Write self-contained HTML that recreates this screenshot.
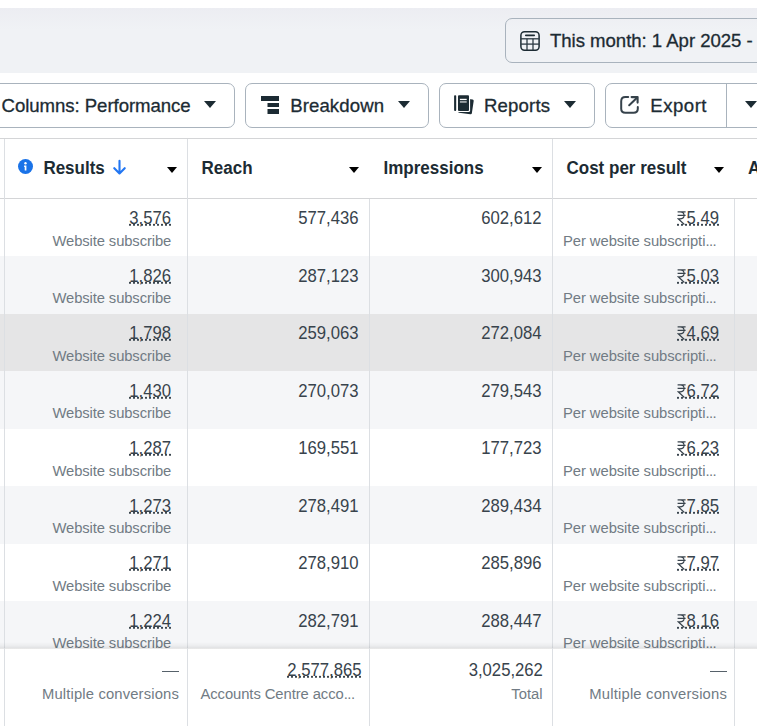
<!DOCTYPE html>
<html><head><meta charset="utf-8">
<style>
*{box-sizing:border-box;margin:0;padding:0}
html,body{width:757px;height:726px;overflow:hidden;background:#fff;position:relative}
body{font-family:"Liberation Sans",sans-serif;color:#1c2b33}
.a{position:absolute}
.band{left:0;top:8px;width:757px;height:65px;background:linear-gradient(#ecedf2,#f0f2f5 22px)}
.btn{position:absolute;border:1px solid #a9b3bd;border-radius:7px;height:45px;top:83px;background:#fff}
.bt{position:absolute;font-size:18.6px;line-height:18.6px;white-space:nowrap;color:#1c2b33;-webkit-text-stroke:0.3px #1c2b33}
.caret{position:absolute;width:0;height:0;border-left:6.3px solid transparent;border-right:6.3px solid transparent;border-top:7.7px solid #1c2b33}
.hl{position:absolute;left:0;width:757px;height:1px;background:#d6d7d9}
.vl{position:absolute;width:1px;background:#dcdfe3}
.row{position:absolute;left:0;width:757px}
.num{position:absolute;white-space:nowrap;color:#38434c}
.sub{position:absolute;white-space:nowrap;color:#717b84}
.dt{background:repeating-linear-gradient(90deg,#3a454e 0 2px,transparent 2px 4px) 0 var(--ul)/100% 1.7px no-repeat}
.hd{position:absolute;font-weight:bold;white-space:nowrap;color:#1c2b33}
.hc{position:absolute;width:0;height:0;border-left:5.2px solid transparent;border-right:5.2px solid transparent;border-top:6.2px solid #000}
</style></head><body>
<div class="a band"></div>

<!-- date button -->
<div class="a" style="left:505px;top:18px;width:300px;height:45px;border:1px solid #a9b3bd;border-radius:7px"></div>
<svg class="a" style="left:520px;top:31px" width="20" height="20" viewBox="0 0 20 20">
  <rect x="0.9" y="0.8" width="18.2" height="18.4" rx="3.6" fill="none" stroke="#1c2b33" stroke-width="1.5"/>
  <line x1="5.8" y1="4.3" x2="14.2" y2="4.3" stroke="#1c2b33" stroke-width="1.7" stroke-linecap="round"/>
  <line x1="1" y1="7.8" x2="19" y2="7.8" stroke="#2c3a43" stroke-width="1.3"/>
  <line x1="1" y1="13.1" x2="19" y2="13.1" stroke="#2c3a43" stroke-width="1.3"/>
  <line x1="7" y1="7.8" x2="7" y2="19" stroke="#2c3a43" stroke-width="1.3"/>
  <line x1="13" y1="7.8" x2="13" y2="19" stroke="#2c3a43" stroke-width="1.3"/>
</svg>
<div class="bt" style="left:550px;top:32.3px;letter-spacing:-0.04px">This month: 1 Apr 2025 -</div>

<!-- toolbar -->
<div class="btn" style="left:-20px;width:255px"></div>
<div class="bt" style="left:1.5px;top:96.8px;letter-spacing:-0.05px">Columns: Performance</div>
<div class="caret" style="left:204px;top:101px"></div>

<div class="btn" style="left:245px;width:184px"></div>
<svg class="a" style="left:261px;top:96px" width="18" height="18" viewBox="0 0 18 18">
  <rect x="0" y="0" width="18" height="5" fill="#1c2b33"/>
  <rect x="6.5" y="7" width="11.5" height="4" fill="#1c2b33"/>
  <rect x="6.5" y="13" width="11.5" height="5" fill="#1c2b33"/>
</svg>
<div class="bt" style="left:290.2px;top:96.8px;letter-spacing:0.1px">Breakdown</div>
<div class="caret" style="left:398px;top:101px"></div>

<div class="btn" style="left:439px;width:156px"></div>
<svg class="a" style="left:450px;top:90px" width="30" height="30" viewBox="0 0 30 30">
  <rect x="8.85" y="8.65" width="14" height="14.9" rx="1.3" transform="rotate(8.5 15.85 16.1)" fill="#1c2b33"/>
  <rect x="6.9" y="4" width="13.2" height="18" rx="1.6" fill="#fff"/>
  <rect x="8" y="5.2" width="11" height="15.7" rx="1" fill="#1c2b33"/>
  <rect x="4.1" y="5.2" width="2.1" height="15.7" rx="0.9" fill="#1c2b33"/>
  <rect x="9.9" y="8.8" width="6.8" height="1.3" fill="#fff"/>
  <rect x="9.9" y="11.3" width="6.8" height="1.3" fill="#fff" fill-opacity="0.8"/>
</svg>
<div class="bt" style="left:484px;top:96.8px;letter-spacing:0.15px">Reports</div>
<div class="caret" style="left:564px;top:101px"></div>

<div class="btn" style="left:605px;width:200px"></div>
<div class="a" style="left:726px;top:83px;width:1px;height:45px;background:#a9b3bd"></div>
<svg class="a" style="left:620.4px;top:95px" width="19" height="19" viewBox="0 0 19 19">
  <path d="M8.2 2.1 H5.4 Q1.2 2.1 1.2 6.3 V13.8 Q1.2 17.8 5.4 17.8 H13.6 Q17.8 17.8 17.8 13.8 V12" fill="none" stroke="#36424b" stroke-width="2" stroke-linecap="round"/>
  <path d="M11.6 2.1 H17.6 V7.6" fill="none" stroke="#36424b" stroke-width="2.1" stroke-linecap="round" stroke-linejoin="round"/>
  <path d="M17 2.7 L9.2 10.3" fill="none" stroke="#36424b" stroke-width="2" stroke-linecap="round"/>
</svg>
<div class="bt" style="left:650.3px;top:96.8px;letter-spacing:0.5px">Export</div>
<div class="caret" style="left:745px;top:101px"></div>

<!-- ROWS -->
<div class="a" style="left:0;top:199px;width:757px;height:57px;background:#fff"></div>
<div class="a" style="left:0;top:256px;width:757px;height:58px;background:#f5f6f8"></div>
<div class="a" style="left:0;top:314px;width:757px;height:57px;background:#e5e5e6"></div>
<div class="a" style="left:0;top:371px;width:757px;height:58px;background:#f5f6f8"></div>
<div class="a" style="left:0;top:429px;width:757px;height:57px;background:#fff"></div>
<div class="a" style="left:0;top:486px;width:757px;height:58px;background:#f5f6f8"></div>
<div class="a" style="left:0;top:544px;width:757px;height:57px;background:#fff"></div>
<div class="a" style="left:0;top:601px;width:757px;height:47px;background:#f5f6f8"></div>
<div class="a" style="left:0;top:138px;width:757px;height:1px;background:#d4d5d7"></div>
<div class="a" style="left:0;top:198px;width:757px;height:1px;background:#d4d5d7"></div>
<div class="a" style="left:4px;top:139px;width:1px;height:587px;background:#dcdfe3"></div>
<div class="a" style="left:187px;top:139px;width:1px;height:587px;background:#dcdfe3"></div>
<div class="a" style="left:369px;top:199px;width:1px;height:527px;background:#dcdfe3"></div>
<div class="a" style="left:552px;top:139px;width:1px;height:587px;background:#dcdfe3"></div>
<div class="a" style="left:734px;top:199px;width:1px;height:527px;background:#dcdfe3"></div>
<svg class="a" style="left:18px;top:159px" width="15" height="15" viewBox="0 0 15 15"><circle cx="7.5" cy="7.5" r="7.5" fill="#1a73e8"/><circle cx="7.5" cy="4.3" r="1.2" fill="#fff"/><path d="M6.1 6.6 H8.4 V11.6 H6.7 V7.9 H6.1 Z" fill="#fff"/></svg>
<div class="hd" style="left:43.40px;top:159.61px;font-size:17px;line-height:17px;transform:scaleY(1.05);transform-origin:0 14.39px;">Results</div>
<svg class="a" style="left:113px;top:159px" width="13" height="16" viewBox="0 0 13 16"><path d="M6.5 1.8 V14.3 M1.3 9.2 L6.5 14.4 L11.7 9.2" fill="none" stroke="#2276f2" stroke-width="2.1" stroke-linecap="round" stroke-linejoin="round"/></svg>
<div class="hd" style="left:201.50px;top:159.61px;font-size:17px;line-height:17px;transform:scaleY(1.05);transform-origin:0 14.39px;">Reach</div>
<div class="hd" style="left:383.50px;top:159.61px;font-size:17px;line-height:17px;transform:scaleY(1.05);transform-origin:0 14.39px;">Impressions</div>
<div class="hd" style="left:566.50px;top:159.61px;font-size:17px;line-height:17px;transform:scaleY(1.05);transform-origin:0 14.39px;">Cost per result</div>
<div class="hd" style="left:748.00px;top:159.61px;font-size:17px;line-height:17px;transform:scaleY(1.05);transform-origin:0 14.39px;">A</div>
<div class="hc" style="left:166.5px;top:167px"></div>
<div class="hc" style="left:348.5px;top:167px"></div>
<div class="hc" style="left:531.5px;top:167px"></div>
<div class="hc" style="left:714px;top:167px"></div>
<div class="num" style="right:586.00px;top:211.26px;font-size:16.7px;line-height:16.7px;transform:scaleY(1.12);transform-origin:0 14.14px;"><span class="dt" style="--ul:15.1px">3,576</span></div>
<div class="sub" style="right:585.90px;top:233.77px;font-size:14.8px;line-height:14.8px;transform:scaleY(1.04);transform-origin:0 12.53px;letter-spacing:-0.12px;">Website subscribe</div>
<div class="num" style="right:398.50px;top:211.26px;font-size:16.7px;line-height:16.7px;transform:scaleY(1.12);transform-origin:0 14.14px;">577,436</div>
<div class="num" style="right:215.50px;top:211.26px;font-size:16.7px;line-height:16.7px;transform:scaleY(1.12);transform-origin:0 14.14px;">602,612</div>
<div class="num" style="right:38.00px;top:211.26px;font-size:16.7px;line-height:16.7px;transform:scaleY(1.12);transform-origin:0 14.14px;"><span class="dt" style="--ul:15.1px"><svg width="9" height="13" viewBox="0 0 9 13" style="display:inline-block;vertical-align:-1px;margin-right:0.3px"><path d="M0.6 1.3 H8.6 M0.6 4.4 H8.6 M3.2 1.3 Q7.1 1.5 7.1 4.5 Q7 7.5 2.8 7.5 H1.3 L7.4 12.6" fill="none" stroke="#38434c" stroke-width="1.15"/></svg>5.49</span></div>
<div class="sub" style="left:563.00px;top:233.77px;font-size:14.8px;line-height:14.8px;transform:scaleY(1.04);transform-origin:0 12.53px;letter-spacing:-0.07px;">Per website subscripti<span style="letter-spacing:-0.5px">...</span></div>
<div class="num" style="right:586.00px;top:268.76px;font-size:16.7px;line-height:16.7px;transform:scaleY(1.12);transform-origin:0 14.14px;"><span class="dt" style="--ul:15.1px">1,826</span></div>
<div class="sub" style="right:585.90px;top:291.27px;font-size:14.8px;line-height:14.8px;transform:scaleY(1.04);transform-origin:0 12.53px;letter-spacing:-0.12px;">Website subscribe</div>
<div class="num" style="right:398.50px;top:268.76px;font-size:16.7px;line-height:16.7px;transform:scaleY(1.12);transform-origin:0 14.14px;">287,123</div>
<div class="num" style="right:215.50px;top:268.76px;font-size:16.7px;line-height:16.7px;transform:scaleY(1.12);transform-origin:0 14.14px;">300,943</div>
<div class="num" style="right:38.00px;top:268.76px;font-size:16.7px;line-height:16.7px;transform:scaleY(1.12);transform-origin:0 14.14px;"><span class="dt" style="--ul:15.1px"><svg width="9" height="13" viewBox="0 0 9 13" style="display:inline-block;vertical-align:-1px;margin-right:0.3px"><path d="M0.6 1.3 H8.6 M0.6 4.4 H8.6 M3.2 1.3 Q7.1 1.5 7.1 4.5 Q7 7.5 2.8 7.5 H1.3 L7.4 12.6" fill="none" stroke="#38434c" stroke-width="1.15"/></svg>5.03</span></div>
<div class="sub" style="left:563.00px;top:291.27px;font-size:14.8px;line-height:14.8px;transform:scaleY(1.04);transform-origin:0 12.53px;letter-spacing:-0.07px;">Per website subscripti<span style="letter-spacing:-0.5px">...</span></div>
<div class="num" style="right:586.00px;top:326.26px;font-size:16.7px;line-height:16.7px;transform:scaleY(1.12);transform-origin:0 14.14px;"><span class="dt" style="--ul:15.1px">1,798</span></div>
<div class="sub" style="right:585.90px;top:348.77px;font-size:14.8px;line-height:14.8px;transform:scaleY(1.04);transform-origin:0 12.53px;letter-spacing:-0.12px;">Website subscribe</div>
<div class="num" style="right:398.50px;top:326.26px;font-size:16.7px;line-height:16.7px;transform:scaleY(1.12);transform-origin:0 14.14px;">259,063</div>
<div class="num" style="right:215.50px;top:326.26px;font-size:16.7px;line-height:16.7px;transform:scaleY(1.12);transform-origin:0 14.14px;">272,084</div>
<div class="num" style="right:38.00px;top:326.26px;font-size:16.7px;line-height:16.7px;transform:scaleY(1.12);transform-origin:0 14.14px;"><span class="dt" style="--ul:15.1px"><svg width="9" height="13" viewBox="0 0 9 13" style="display:inline-block;vertical-align:-1px;margin-right:0.3px"><path d="M0.6 1.3 H8.6 M0.6 4.4 H8.6 M3.2 1.3 Q7.1 1.5 7.1 4.5 Q7 7.5 2.8 7.5 H1.3 L7.4 12.6" fill="none" stroke="#38434c" stroke-width="1.15"/></svg>4.69</span></div>
<div class="sub" style="left:563.00px;top:348.77px;font-size:14.8px;line-height:14.8px;transform:scaleY(1.04);transform-origin:0 12.53px;letter-spacing:-0.07px;">Per website subscripti<span style="letter-spacing:-0.5px">...</span></div>
<div class="num" style="right:586.00px;top:383.76px;font-size:16.7px;line-height:16.7px;transform:scaleY(1.12);transform-origin:0 14.14px;"><span class="dt" style="--ul:15.1px">1,430</span></div>
<div class="sub" style="right:585.90px;top:406.27px;font-size:14.8px;line-height:14.8px;transform:scaleY(1.04);transform-origin:0 12.53px;letter-spacing:-0.12px;">Website subscribe</div>
<div class="num" style="right:398.50px;top:383.76px;font-size:16.7px;line-height:16.7px;transform:scaleY(1.12);transform-origin:0 14.14px;">270,073</div>
<div class="num" style="right:215.50px;top:383.76px;font-size:16.7px;line-height:16.7px;transform:scaleY(1.12);transform-origin:0 14.14px;">279,543</div>
<div class="num" style="right:38.00px;top:383.76px;font-size:16.7px;line-height:16.7px;transform:scaleY(1.12);transform-origin:0 14.14px;"><span class="dt" style="--ul:15.1px"><svg width="9" height="13" viewBox="0 0 9 13" style="display:inline-block;vertical-align:-1px;margin-right:0.3px"><path d="M0.6 1.3 H8.6 M0.6 4.4 H8.6 M3.2 1.3 Q7.1 1.5 7.1 4.5 Q7 7.5 2.8 7.5 H1.3 L7.4 12.6" fill="none" stroke="#38434c" stroke-width="1.15"/></svg>6.72</span></div>
<div class="sub" style="left:563.00px;top:406.27px;font-size:14.8px;line-height:14.8px;transform:scaleY(1.04);transform-origin:0 12.53px;letter-spacing:-0.07px;">Per website subscripti<span style="letter-spacing:-0.5px">...</span></div>
<div class="num" style="right:586.00px;top:441.26px;font-size:16.7px;line-height:16.7px;transform:scaleY(1.12);transform-origin:0 14.14px;"><span class="dt" style="--ul:15.1px">1,287</span></div>
<div class="sub" style="right:585.90px;top:463.77px;font-size:14.8px;line-height:14.8px;transform:scaleY(1.04);transform-origin:0 12.53px;letter-spacing:-0.12px;">Website subscribe</div>
<div class="num" style="right:398.50px;top:441.26px;font-size:16.7px;line-height:16.7px;transform:scaleY(1.12);transform-origin:0 14.14px;">169,551</div>
<div class="num" style="right:215.50px;top:441.26px;font-size:16.7px;line-height:16.7px;transform:scaleY(1.12);transform-origin:0 14.14px;">177,723</div>
<div class="num" style="right:38.00px;top:441.26px;font-size:16.7px;line-height:16.7px;transform:scaleY(1.12);transform-origin:0 14.14px;"><span class="dt" style="--ul:15.1px"><svg width="9" height="13" viewBox="0 0 9 13" style="display:inline-block;vertical-align:-1px;margin-right:0.3px"><path d="M0.6 1.3 H8.6 M0.6 4.4 H8.6 M3.2 1.3 Q7.1 1.5 7.1 4.5 Q7 7.5 2.8 7.5 H1.3 L7.4 12.6" fill="none" stroke="#38434c" stroke-width="1.15"/></svg>6.23</span></div>
<div class="sub" style="left:563.00px;top:463.77px;font-size:14.8px;line-height:14.8px;transform:scaleY(1.04);transform-origin:0 12.53px;letter-spacing:-0.07px;">Per website subscripti<span style="letter-spacing:-0.5px">...</span></div>
<div class="num" style="right:586.00px;top:498.76px;font-size:16.7px;line-height:16.7px;transform:scaleY(1.12);transform-origin:0 14.14px;"><span class="dt" style="--ul:15.1px">1,273</span></div>
<div class="sub" style="right:585.90px;top:521.27px;font-size:14.8px;line-height:14.8px;transform:scaleY(1.04);transform-origin:0 12.53px;letter-spacing:-0.12px;">Website subscribe</div>
<div class="num" style="right:398.50px;top:498.76px;font-size:16.7px;line-height:16.7px;transform:scaleY(1.12);transform-origin:0 14.14px;">278,491</div>
<div class="num" style="right:215.50px;top:498.76px;font-size:16.7px;line-height:16.7px;transform:scaleY(1.12);transform-origin:0 14.14px;">289,434</div>
<div class="num" style="right:38.00px;top:498.76px;font-size:16.7px;line-height:16.7px;transform:scaleY(1.12);transform-origin:0 14.14px;"><span class="dt" style="--ul:15.1px"><svg width="9" height="13" viewBox="0 0 9 13" style="display:inline-block;vertical-align:-1px;margin-right:0.3px"><path d="M0.6 1.3 H8.6 M0.6 4.4 H8.6 M3.2 1.3 Q7.1 1.5 7.1 4.5 Q7 7.5 2.8 7.5 H1.3 L7.4 12.6" fill="none" stroke="#38434c" stroke-width="1.15"/></svg>7.85</span></div>
<div class="sub" style="left:563.00px;top:521.27px;font-size:14.8px;line-height:14.8px;transform:scaleY(1.04);transform-origin:0 12.53px;letter-spacing:-0.07px;">Per website subscripti<span style="letter-spacing:-0.5px">...</span></div>
<div class="num" style="right:586.00px;top:556.26px;font-size:16.7px;line-height:16.7px;transform:scaleY(1.12);transform-origin:0 14.14px;"><span class="dt" style="--ul:15.1px">1,271</span></div>
<div class="sub" style="right:585.90px;top:578.77px;font-size:14.8px;line-height:14.8px;transform:scaleY(1.04);transform-origin:0 12.53px;letter-spacing:-0.12px;">Website subscribe</div>
<div class="num" style="right:398.50px;top:556.26px;font-size:16.7px;line-height:16.7px;transform:scaleY(1.12);transform-origin:0 14.14px;">278,910</div>
<div class="num" style="right:215.50px;top:556.26px;font-size:16.7px;line-height:16.7px;transform:scaleY(1.12);transform-origin:0 14.14px;">285,896</div>
<div class="num" style="right:38.00px;top:556.26px;font-size:16.7px;line-height:16.7px;transform:scaleY(1.12);transform-origin:0 14.14px;"><span class="dt" style="--ul:15.1px"><svg width="9" height="13" viewBox="0 0 9 13" style="display:inline-block;vertical-align:-1px;margin-right:0.3px"><path d="M0.6 1.3 H8.6 M0.6 4.4 H8.6 M3.2 1.3 Q7.1 1.5 7.1 4.5 Q7 7.5 2.8 7.5 H1.3 L7.4 12.6" fill="none" stroke="#38434c" stroke-width="1.15"/></svg>7.97</span></div>
<div class="sub" style="left:563.00px;top:578.77px;font-size:14.8px;line-height:14.8px;transform:scaleY(1.04);transform-origin:0 12.53px;letter-spacing:-0.07px;">Per website subscripti<span style="letter-spacing:-0.5px">...</span></div>
<div class="num" style="right:586.00px;top:613.76px;font-size:16.7px;line-height:16.7px;transform:scaleY(1.12);transform-origin:0 14.14px;"><span class="dt" style="--ul:15.1px">1,224</span></div>
<div class="sub" style="right:585.90px;top:636.27px;font-size:14.8px;line-height:14.8px;transform:scaleY(1.04);transform-origin:0 12.53px;letter-spacing:-0.12px;">Website subscribe</div>
<div class="num" style="right:398.50px;top:613.76px;font-size:16.7px;line-height:16.7px;transform:scaleY(1.12);transform-origin:0 14.14px;">282,791</div>
<div class="num" style="right:215.50px;top:613.76px;font-size:16.7px;line-height:16.7px;transform:scaleY(1.12);transform-origin:0 14.14px;">288,447</div>
<div class="num" style="right:38.00px;top:613.76px;font-size:16.7px;line-height:16.7px;transform:scaleY(1.12);transform-origin:0 14.14px;"><span class="dt" style="--ul:15.1px"><svg width="9" height="13" viewBox="0 0 9 13" style="display:inline-block;vertical-align:-1px;margin-right:0.3px"><path d="M0.6 1.3 H8.6 M0.6 4.4 H8.6 M3.2 1.3 Q7.1 1.5 7.1 4.5 Q7 7.5 2.8 7.5 H1.3 L7.4 12.6" fill="none" stroke="#38434c" stroke-width="1.15"/></svg>8.16</span></div>
<div class="sub" style="left:563.00px;top:636.27px;font-size:14.8px;line-height:14.8px;transform:scaleY(1.04);transform-origin:0 12.53px;letter-spacing:-0.07px;">Per website subscripti<span style="letter-spacing:-0.5px">...</span></div>
<div class="a" style="left:0;top:642px;width:757px;height:7px;background:linear-gradient(to bottom,rgba(0,0,0,0),rgba(0,0,0,0.035) 50%,rgba(0,0,0,0.1))"></div>
<div class="a" style="left:0;top:649px;width:757px;height:77px;background:#fff"></div>
<div class="a" style="left:4px;top:648px;width:1px;height:78px;background:#dcdfe3"></div>
<div class="a" style="left:187px;top:648px;width:1px;height:78px;background:#dcdfe3"></div>
<div class="a" style="left:369px;top:648px;width:1px;height:78px;background:#dcdfe3"></div>
<div class="a" style="left:552px;top:648px;width:1px;height:78px;background:#dcdfe3"></div>
<div class="a" style="left:734px;top:648px;width:1px;height:78px;background:#dcdfe3"></div>
<div class="a" style="left:161.5px;top:670.6px;width:17.5px;height:1.3px;background:#56616a"></div>
<div class="sub" style="right:578.00px;top:686.77px;font-size:14.8px;line-height:14.8px;transform:scaleY(1.04);transform-origin:0 12.53px;letter-spacing:0.15px;">Multiple conversions</div>
<div class="num" style="right:395.40px;top:663.26px;font-size:16.7px;line-height:16.7px;transform:scaleY(1.12);transform-origin:0 14.14px;"><span class="dt" style="--ul:15.1px">2,577,865</span></div>
<div class="sub" style="left:200.50px;top:686.77px;font-size:14.8px;line-height:14.8px;transform:scaleY(1.04);transform-origin:0 12.53px;letter-spacing:-0.08px;">Accounts Centre acco<span style="letter-spacing:-0.5px">...</span></div>
<div class="num" style="right:214.10px;top:663.26px;font-size:16.7px;line-height:16.7px;transform:scaleY(1.12);transform-origin:0 14.14px;">3,025,262</div>
<div class="sub" style="right:214.40px;top:686.77px;font-size:14.8px;line-height:14.8px;transform:scaleY(1.04);transform-origin:0 12.53px;">Total</div>
<div class="a" style="left:709.5px;top:670.6px;width:17.5px;height:1.3px;background:#56616a"></div>
<div class="sub" style="right:30.00px;top:686.77px;font-size:14.8px;line-height:14.8px;transform:scaleY(1.04);transform-origin:0 12.53px;letter-spacing:0.18px;">Multiple conversions</div>
<!-- /ROWS -->

</body></html>
